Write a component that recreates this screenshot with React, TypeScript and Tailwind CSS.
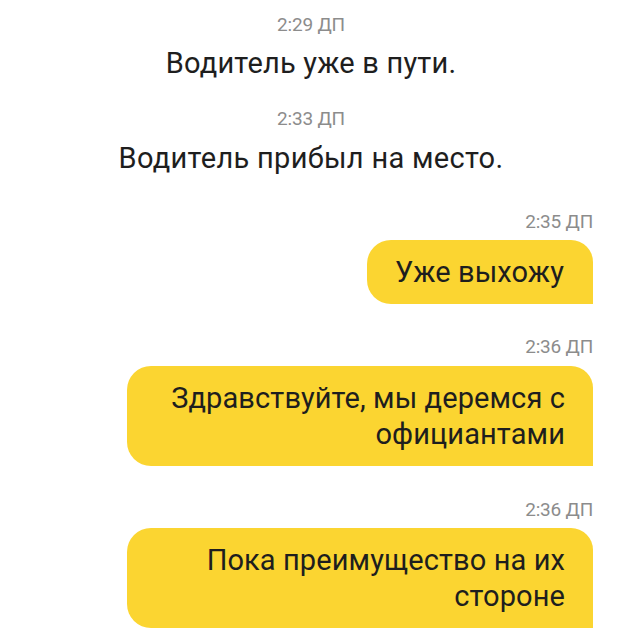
import React from "react";

const font = { fontFamily: "Roboto, 'Noto Sans', sans-serif" };

function Ts({ children, className = "" }: { children: React.ReactNode; className?: string }) {
  return (
    <div className={`text-[19px] leading-[20px] tracking-[-0.2px] text-[#8c8c8c] ${className}`}>{children}</div>
  );
}

export default function App() {
  return (
    <div className="w-[620px] h-[643px] bg-white overflow-hidden text-[#1e1e1e]" style={font}>
      <div className="flex flex-col items-center pt-[15px] pl-[2px]">
        <Ts>2:29 ДП</Ts>
        <div className="mt-[11px] text-[29px] leading-[35px] tracking-[0.2px]">Водитель уже в пути.</div>
        <Ts className="mt-[28px]">2:33 ДП</Ts>
        <div className="mt-[12px] text-[29px] leading-[35px] tracking-[0.3px]">Водитель прибыл на место.</div>
      </div>
      <div className="flex flex-col items-end pr-[27px]">
        <Ts className="mt-[36px]">2:35 ДП</Ts>
        <div className="mt-[8px] bg-[#fbd531] rounded-l-[24px] rounded-tr-[22px] pl-[28px] pr-[29px] py-[14px] text-[29px] leading-[36px] tracking-[0.1px]">
          Уже выхожу
        </div>
        <Ts className="mt-[33px]">2:36 ДП</Ts>
        <div className="mt-[9px] w-[466px] bg-[#fbd531] rounded-l-[24px] rounded-tr-[22px] pl-[24px] pr-[28px] py-[14px] text-[29px] leading-[36px] tracking-[0.1px] text-right">
          Здравствуйте, мы деремся с официантами
        </div>
        <Ts className="mt-[34px]">2:36 ДП</Ts>
        <div className="mt-[8px] w-[466px] bg-[#fbd531] rounded-l-[24px] rounded-tr-[22px] pl-[24px] pr-[28px] py-[14px] text-[29px] leading-[36px] tracking-[0.1px] text-right">
          Пока преимущество на их стороне
        </div>
      </div>
    </div>
  );
}
